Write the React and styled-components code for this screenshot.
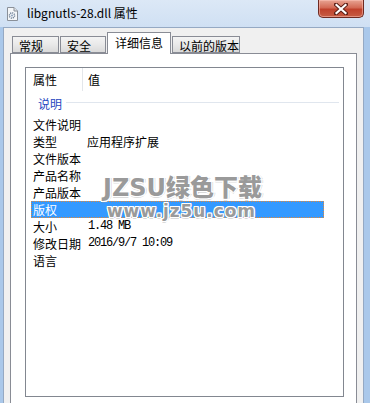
import React from "react";
import styled, { createGlobalStyle } from "styled-components";

const GlobalStyle = createGlobalStyle`
  html, body { margin: 0; padding: 0; background: #ffffff; }
  body { font-family: "Noto Sans CJK SC", "Noto Sans", sans-serif; font-size: 12px; color: #000; }
  * { box-sizing: border-box; }
`;

const CJK = `"Noto Sans CJK SC", "Noto Sans", sans-serif`;

const Window = styled.div`
  position: relative;
  width: 370px;
  height: 403px;
  overflow: hidden;
  display: flex;
  flex-direction: column;
  background: linear-gradient(180deg, #dce8f6 0%, #c9dcf2 40px, #b9d1ee 100%);
`;

const TitleBar = styled.div`
  height: 27px;
  flex: none;
  display: flex;
  align-items: flex-start;
  padding-left: 7px;
  position: relative;
`;

const TitleIcon = styled.svg`
  margin-top: 7px;
  width: 11px;
  height: 14px;
  flex: none;
`;

const TitleText = styled.div`
  margin-left: 9px;
  margin-top: 5px;
  font-family: ${CJK};
  font-size: 12px;
  line-height: 16px;
  color: #000;
`;

const CloseButton = styled.div`
  position: absolute;
  top: 0;
  right: 6px;
  width: 46px;
  height: 18px;
  border: 1px solid #6e2a22;
  border-top: none;
  border-radius: 0 0 5px 5px;
  background: linear-gradient(180deg, #e8a493 0%, #d36a55 45%, #c0412c 55%, #c65d44 100%);
  box-shadow: inset 0 0 0 1px rgba(255, 200, 190, 0.5);
  display: flex;
  align-items: center;
  justify-content: center;
`;

const Body = styled.div`
  flex: 1;
  display: flex;
  min-height: 0;
`;

const SideFrame = styled.div`
  flex: none;
  width: ${(p) => p.$w}px;
  background: #aac8ea;
`;

const Client = styled.div`
  flex: 1;
  display: flex;
  flex-direction: column;
  background: #f0f0f0;
  border: 1px solid #95a9c3;
  border-bottom: none;
  min-width: 0;
`;

const TabStrip = styled.div`
  height: 25px;
  flex: none;
  display: flex;
  align-items: flex-end;
  padding-left: 8px;
  gap: 1px;
  position: relative;
  z-index: 2;
`;

const Tab = styled.div`
  width: ${(p) => p.$w}px;
  height: ${(p) => (p.$active ? 22 : 17)}px;
  margin-bottom: ${(p) => (p.$active ? -1 : 0)}px;
  border: 1px solid #898c95;
  border-bottom: ${(p) => (p.$active ? "none" : "1px solid #898c95")};
  background: ${(p) =>
    p.$active ? "#ffffff" : "linear-gradient(180deg, #f4f4f4 0%, #e9e9e9 50%, #dadada 100%)"};
  font-family: ${CJK};
  font-size: 12px;
  line-height: 15px;
  padding-left: ${(p) => (p.$active ? 7 : 6)}px;
  padding-top: ${(p) => (p.$active ? 2 : 1)}px;
  white-space: nowrap;
  color: #000;
`;

const Panel = styled.div`
  flex: none;
  height: 400px;
  margin: 0 6px;
  border: 1px solid #898c95;
  background: #ffffff;
  padding: 13px 12px 0 14px;
`;

const ListBox = styled.div`
  width: 319px;
  height: 330px;
  border: 1px solid #828790;
  background: #ffffff;
  display: flex;
  flex-direction: column;
`;

const Header = styled.div`
  height: 23px;
  display: flex;
  align-items: stretch;
  font-family: ${CJK};
  font-size: 12px;
`;

const HeaderCell = styled.div`
  width: ${(p) => (p.$w ? `${p.$w}px` : "auto")};
  flex: ${(p) => (p.$w ? "none" : "1")};
  padding-left: ${(p) => p.$pl}px;
  display: flex;
  align-items: center;
  border-right: ${(p) => (p.$sep ? "1px solid #e3e6ea" : "none")};
`;

const Group = styled.div`
  height: 25px;
  display: flex;
  align-items: center;
  padding-left: 12px;
  padding-bottom: 1px;
  gap: 4px;
`;

const GroupLabel = styled.span`
  color: #1e46c0;
  font-family: ${CJK};
  font-size: 12px;
`;

const GroupLine = styled.div`
  flex: 1;
  height: 1px;
  background: #e0e6ee;
  margin-right: 4px;
  margin-bottom: 2px;
`;

const Row = styled.div`
  height: 17px;
  width: 293px;
  margin-left: 5px;
  display: flex;
  align-items: center;
  background: ${(p) => (p.$selected ? "#3399ff" : "transparent")};
  outline: ${(p) => (p.$selected ? "1px dotted #e0883a" : "none")};
  outline-offset: -1px;
  color: ${(p) => (p.$selected ? "#ffffff" : "#000000")};
`;

const Label = styled.div`
  width: 56px;
  padding-left: 2px;
  flex: none;
  font-family: ${CJK};
  font-size: 12px;
  line-height: 17px;
  white-space: nowrap;
`;

const Value = styled.div`
  font-family: ${(p) => (p.$mono ? `"Liberation Mono", "DejaVu Sans Mono", monospace` : CJK)};
  font-size: 12px;
  letter-spacing: ${(p) => (p.$mono ? "-1.2px" : "0")};
  line-height: 17px;
  white-space: nowrap;
  padding-left: ${(p) => (p.$mono ? 1 : 0)}px;
`;

const Watermark = styled.div`
  position: absolute;
  left: 103px;
  top: 176px;
  display: flex;
  flex-direction: column;
  gap: 3px;
  pointer-events: none;
  color: #9a9a9a;
  font-weight: 900;
  text-shadow:
    1px 0 0 #fff, -1px 0 0 #fff, 0 1px 0 #fff, 0 -1px 0 #fff,
    1px 1px 0 #fff, -1px -1px 0 #fff, 1px -1px 0 #fff, -1px 1px 0 #fff,
    2px 0 0 rgba(150,150,150,0.35), 0 2px 0 rgba(150,150,150,0.35);
`;

const WmBig = styled.div`
  font-family: "DejaVu Sans", "Noto Sans CJK SC", sans-serif;
  font-size: 24px;
  line-height: 25px;
  white-space: nowrap;
`;

const WmSmall = styled.div`
  font-family: "DejaVu Sans", sans-serif;
  font-size: 17px;
  line-height: 15px;
  letter-spacing: 0.9px;
  margin-left: 4px;
  white-space: nowrap;
`;

const rows = [
  { label: "文件说明", value: "" },
  { label: "类型", value: "应用程序扩展" },
  { label: "文件版本", value: "" },
  { label: "产品名称", value: "" },
  { label: "产品版本", value: "" },
  { label: "版权", value: "", selected: true },
  { label: "大小", value: "1.48 MB", mono: true },
  { label: "修改日期", value: "2016/9/7 10:09", mono: true },
  { label: "语言", value: "" },
];

const tabs = [
  { label: "常规", w: 47 },
  { label: "安全", w: 46 },
  { label: "详细信息", w: 64, active: true },
  { label: "以前的版本", w: 68 },
];

export default function App() {
  return (
    <>
      <GlobalStyle />
      <Window>
        <TitleBar>
          <TitleIcon viewBox="0 0 11 14">
            <path d="M0.5 0.5 H7 L10.5 4 V13.5 H0.5 Z" fill="#f4f6f8" stroke="#8a9099" />
            <path d="M7 0.5 V4 H10.5" fill="#dfe3e8" stroke="#8a9099" />
            <circle cx="5" cy="8.5" r="2.6" fill="none" stroke="#6d7f96" strokeWidth="1.4" strokeDasharray="1.2 0.8" />
            <circle cx="5" cy="8.5" r="1" fill="#8ea3bd" />
          </TitleIcon>
          <TitleText>libgnutls-28.dll 属性</TitleText>
          <CloseButton>
            <svg width="14" height="12" viewBox="0 0 14 12">
              <path d="M2 1.5 L12 10.5 M12 1.5 L2 10.5" stroke="#5a1e16" strokeWidth="4" strokeLinecap="square" />
              <path d="M2.5 2 L11.5 10 M11.5 2 L2.5 10" stroke="#ffffff" strokeWidth="2.2" strokeLinecap="square" />
            </svg>
          </CloseButton>
        </TitleBar>
        <Body>
          <SideFrame $w={3} />
          <Client>
            <TabStrip>
              {tabs.map((t) => (
                <Tab key={t.label} $w={t.w} $active={t.active}>
                  {t.label}
                </Tab>
              ))}
            </TabStrip>
            <Panel>
              <ListBox>
                <Header>
                  <HeaderCell $w={57} $pl={7} $sep>
                    属性
                  </HeaderCell>
                  <HeaderCell $pl={5}>值</HeaderCell>
                </Header>
                <Group>
                  <GroupLabel>说明</GroupLabel>
                  <GroupLine />
                </Group>
                {rows.map((r) => (
                  <Row key={r.label} $selected={r.selected}>
                    <Label>{r.label}</Label>
                    <Value $mono={r.mono}>{r.value}</Value>
                  </Row>
                ))}
              </ListBox>
            </Panel>
          </Client>
          <SideFrame $w={6} />
        </Body>
        <Watermark>
          <WmBig>JZSU绿色下载</WmBig>
          <WmSmall>www.jz5u.com</WmSmall>
        </Watermark>
      </Window>
    </>
  );
}
